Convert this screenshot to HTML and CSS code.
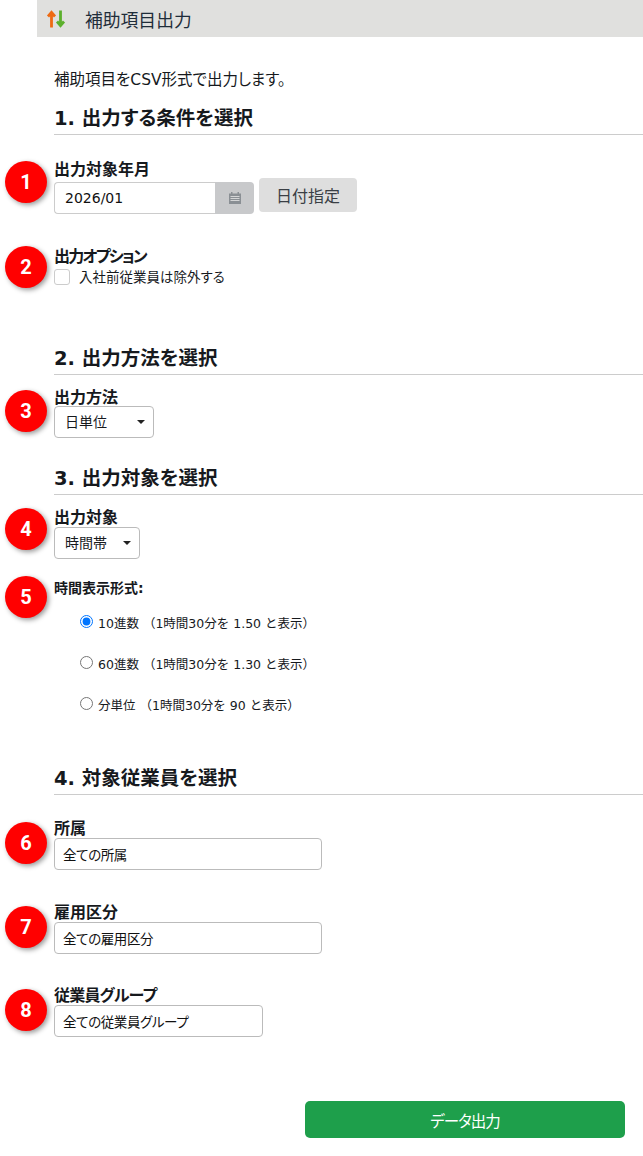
FILE: index.html
```html
<!DOCTYPE html>
<html lang="ja">
<head>
<meta charset="UTF-8" />
<meta name="viewport" content="width=device-width, initial-scale=1" />
<title>補助項目出力</title>
<link rel="stylesheet" href="styles.css">
</head>
<body>
  <header class="page-title">
    <svg class="title-icon" width="20" height="20" viewBox="0 0 20 20" aria-hidden="true">
      <path d="M5.5 18.5V3.5M2 7.5 5.5 3.5 9 7.5" fill="none" stroke="#ee6a12" stroke-width="2.8"/>
      <path d="M14.5 1.5V16.5M11 12.5 14.5 16.5 18 12.5" fill="none" stroke="#5cb02c" stroke-width="2.8"/>
    </svg>
    <h1>補助項目出力</h1>
  </header>

  <main class="content">
    <p class="intro">補助項目をCSV形式で出力します。</p>

    <section class="section section-1">
      <h2>1. 出力する条件を選択</h2>
      <div class="field field-month">
        <span class="badge badge-month">1</span>
        <label class="field-label">出力対象年月</label>
        <div class="month-row">
          <div class="month-input">
            <input type="text" value="2026/01" readonly>
            <span class="month-addon">
              <svg width="14" height="14" viewBox="0 0 14 14" aria-hidden="true">
                <path d="M1 2.5h2V1h1.5v1.5h5V1H11v1.5h2V13H1z" fill="#8a8f94"/>
                <path d="M2.5 5.5h9M2.5 7.5h9M2.5 9.5h9" stroke="#d4d5d6" stroke-width="1"/>
              </svg>
            </span>
          </div>
          <button class="btn-date" type="button">日付指定</button>
        </div>
      </div>
      <div class="field field-option">
        <span class="badge badge-option">2</span>
        <label class="field-label label-katakana">出力オプション</label>
        <label class="check-row"><span class="check-box"></span>入社前従業員は除外する</label>
      </div>
    </section>

    <section class="section section-2">
      <h2>2. 出力方法を選択</h2>
      <div class="field field-method">
        <span class="badge badge-method">3</span>
        <label class="field-label">出力方法</label>
        <div class="select-box select-method">日単位</div>
      </div>
    </section>

    <section class="section section-3">
      <h2>3. 出力対象を選択</h2>
      <div class="field field-target">
        <span class="badge badge-target">4</span>
        <label class="field-label">出力対象</label>
        <div class="select-box select-target">時間帯</div>
      </div>
      <div class="field field-format">
        <span class="badge">5</span>
        <div class="format-label">時間表示形式:</div>
        <label class="radio-row"><input type="radio" name="format" checked>10進数 （1時間30分を 1.50 と表示）</label>
        <label class="radio-row"><input type="radio" name="format">60進数 （1時間30分を 1.30 と表示）</label>
        <label class="radio-row"><input type="radio" name="format">分単位 （1時間30分を 90 と表示）</label>
      </div>
    </section>

    <section class="section section-4">
      <h2>4. 対象従業員を選択</h2>
      <div class="field field-group field-affiliation">
        <span class="badge badge-group">6</span>
        <label class="field-label">所属</label>
        <input class="text-box" type="text" value="全ての所属" readonly>
      </div>
      <div class="field field-group field-employment">
        <span class="badge badge-group">7</span>
        <label class="field-label">雇用区分</label>
        <input class="text-box" type="text" value="全ての雇用区分" readonly>
      </div>
      <div class="field field-group">
        <span class="badge badge-group">8</span>
        <label class="field-label label-group">従業員グループ</label>
        <input class="text-box text-box-short" type="text" value="全ての従業員グループ" readonly>
      </div>
    </section>

    <div class="actions">
      <button class="btn-submit" type="button">データ出力</button>
    </div>
  </main>
</body>
</html>
```

FILE: styles.css
```css
* {
  box-sizing: border-box;
}
body {
  margin: 0;
  background: #fff;
  color: #16191d;
  font-family: "DejaVu Sans", "Noto Sans CJK JP", sans-serif;
  font-size: 14px;
  font-feature-settings: "palt";
}
input, button {
  font-family: inherit;
  font-feature-settings: inherit;
}
.page-title {
  display: flex;
  align-items: center;
  height: 37px;
  margin-left: 37px;
  padding-left: 9px;
  background: #e0e0de;
}
.title-icon {
  flex: none;
}
.page-title h1 {
  margin: 4px 0 0 19px;
  font-size: 17.8px;
  font-weight: normal;
  line-height: 37px;
  color: #1f2d3a;
}
.content {
  padding-left: 54px;
}
.intro {
  margin: 0;
  padding-top: 33px;
  font-size: 15.5px;
  line-height: 20px;
}
.section h2 {
  margin: 0;
  height: 29px;
  font-size: 19.5px;
  line-height: 26px;
  border-bottom: 1px solid #ccc;
}
.section-1 {
  margin-top: 16px;
}
.section-2 {
  margin-top: 60px;
}
.section-3 {
  margin-top: 28px;
}
.section-4 {
  margin-top: 41px;
}
.field {
  position: relative;
}
.badge {
  position: absolute;
  left: -49px;
  top: -1px;
  width: 42px;
  height: 42px;
  border-radius: 50%;
  background: #f00;
  box-shadow: 2px 2px 5px rgba(0, 0, 0, 0.4);
  color: #fff;
  font: bold 20px/42px Roboto, sans-serif;
  text-align: center;
}
.badge-month {
  top: 2px;
}
.badge-option {
  top: 0;
}
.badge-method {
  top: 3px;
}
.badge-target {
  top: 1px;
}
.badge-group {
  top: 3px;
}
.field-label {
  display: block;
  font-size: 16px;
  font-weight: bold;
  line-height: 22px;
}
.label-katakana {
  letter-spacing: -1.8px;
}
.label-group {
  letter-spacing: -0.8px;
}
.field-month {
  margin-top: 24px;
}
.month-row {
  display: flex;
  align-items: flex-start;
}
.month-input {
  display: flex;
  width: 200px;
  height: 32px;
  margin-top: 1px;
}
.month-input input {
  flex: 1;
  min-width: 0;
  padding: 0 10px;
  border: 1px solid #ccc;
  border-right: none;
  border-radius: 4px 0 0 4px;
  font-size: 14px;
  color: #111;
  outline: none;
}
.month-addon {
  display: flex;
  flex: none;
  align-items: center;
  justify-content: center;
  width: 39px;
  background: #c8c9cb;
  border-radius: 0 4px 4px 0;
}
.btn-date {
  width: 98px;
  height: 34px;
  margin: -3px 0 0 5px;
  padding: 0;
  border: none;
  border-radius: 4px;
  background: #dedede;
  color: #3a3f45;
  font-size: 16px;
}
.field-option {
  margin-top: 32px;
}
.check-row {
  display: flex;
  align-items: center;
  font-size: 13.5px;
  line-height: 18px;
}
.check-box {
  width: 16px;
  height: 16px;
  margin-right: 9px;
  border: 1px solid #ccc;
  border-radius: 3px;
  background: #fff;
}
.field-method, .field-target {
  margin-top: 12px;
}
.select-box {
  position: relative;
  height: 32px;
  padding-left: 10px;
  border: 1px solid #bbb;
  border-radius: 4px;
  font-size: 14px;
  line-height: 30px;
}
.select-box::after {
  content: "";
  position: absolute;
  top: 13px;
  right: 8px;
  border-style: solid;
  border-width: 4px 4px 0;
  border-color: #222 transparent transparent;
}
.select-method {
  width: 100px;
  margin-top: -3px;
}
.select-target {
  width: 86px;
  margin-top: -2px;
}
.field-format {
  margin-top: 18px;
  padding-top: 1px;
}
.format-label {
  font-size: 14px;
  font-weight: bold;
  line-height: 20px;
  margin-bottom: 4px;
}
.radio-row {
  display: flex;
  align-items: center;
  height: 42px;
  padding-left: 26px;
  font-size: 12.5px;
  font-feature-settings: normal;
  margin-top: -1px;
}
.radio-row input {
  width: 13px;
  height: 13px;
  margin: -2px 5px 0 0;
}
.field-group {
  margin-top: 32px;
}
.field-group .field-label {
  line-height: 20px;
}
.field-affiliation {
  margin-top: 24px;
}
.field-employment {
  margin-top: 33px;
}
.text-box {
  display: block;
  width: 268px;
  height: 32px;
  margin-top: -1px;
  padding: 0 8px;
  border: 1px solid #bbb;
  border-radius: 4px;
  font-size: 13.5px;
  letter-spacing: -0.4px;
  color: #111;
  outline: none;
}
.text-box-short {
  width: 209px;
}
.actions {
  display: flex;
  justify-content: flex-end;
  margin-top: 64px;
  padding-right: 18px;
}
.btn-submit {
  width: 320px;
  height: 37px;
  border: none;
  border-radius: 5px;
  background: #1e9f4b;
  color: #fff;
  font-size: 15.5px;
  letter-spacing: -1px;
}
```
